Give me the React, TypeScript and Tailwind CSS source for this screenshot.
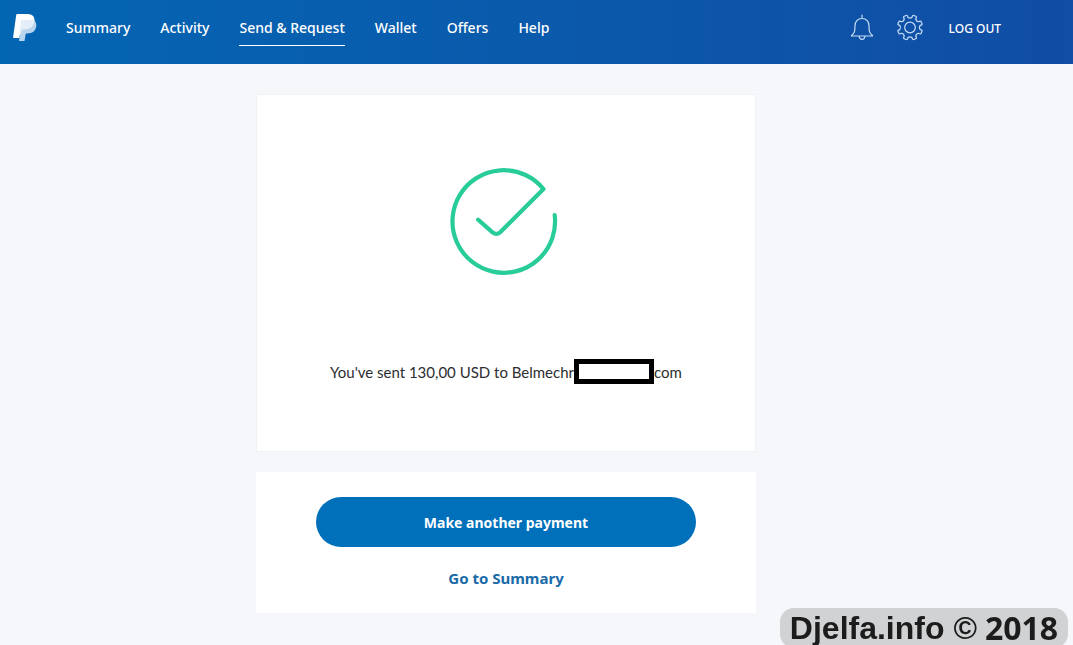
import { clsx } from 'clsx'

const NAV_ITEMS = [
  { label: 'Summary', active: false },
  { label: 'Activity', active: false },
  { label: 'Send & Request', active: true },
  { label: 'Wallet', active: false },
  { label: 'Offers', active: false },
  { label: 'Help', active: false },
]

// Outline of an eight-toothed gear centred on 0,0
function gearPath() {
  const point = (radius: number, degrees: number) => {
    const rad = (degrees * Math.PI) / 180
    return `${(radius * Math.cos(rad)).toFixed(2)} ${(radius * Math.sin(rad)).toFixed(2)}`
  }
  let d = ''
  for (let i = 0; i < 8; i++) {
    const a = 22.5 + i * 45
    d += `${i === 0 ? 'M' : 'L'}${point(10.4, a - 11)}`
    d += `Q${point(12.8, a - 11)} ${point(12.6, a - 5)}L${point(12.6, a + 5)}`
    d += `Q${point(12.8, a + 11)} ${point(10.4, a + 11)}`
    d += `Q${point(8.6, a + 22.5)} ${point(10.4, a + 34)}`
  }
  return d + 'Z'
}

function Logo() {
  return (
    <svg width="24" height="28" viewBox="0 0 24 28" aria-hidden="true">
      <path d="M4.2 0H15.5Q21.8 .8 21.5 6.5Q20.5 15.3 12 15.5H8L6.3 24H.6Q0 24 .1 23.3L3.2 1Q3.4 0 4.2 0Z" fill="#fff" />
      <path d="M9.8 6H20.5Q23.9 8 23.3 12.5Q21.8 19.5 14.5 19.5H12.8L11.5 27H6L8.3 8Q8.6 6 9.8 6Z" fill="#b9d5ee" />
      <path d="M9.8 6H21.5Q20.8 15.3 12 15.5H9.3L8 19.5H7L8.3 8Q8.6 6 9.8 6Z" fill="#e3eef8" />
    </svg>
  )
}

function BellIcon() {
  return (
    <svg width="24" height="28" viewBox="0 0 24 28" fill="none" stroke="#c5dcf5" strokeWidth="1.2" strokeLinecap="round" strokeLinejoin="round" aria-hidden="true">
      <path d="M12 1V4.500M12 4.500C7.5 4.500 5 7.800 5 12C5 17.500 4.5 19 1.5 21.500V22H22.5V21.500C19.5 19 19 17.500 19 12C19 7.800 16.5 4.500 12 4.500Z" />
      <path d="M9.2 22.500C9.5 26.300 14.5 26.300 14.8 22.500" />
    </svg>
  )
}

function GearIcon() {
  return (
    <svg width="28" height="28" viewBox="-14 -13.500 28 28" fill="none" stroke="#c5dcf5" strokeWidth="1.2" strokeLinejoin="round" aria-hidden="true">
      <path d={gearPath()} />
      <circle r="5.3" />
    </svg>
  )
}

function SuccessIcon() {
  return (
    <svg width="112" height="112" viewBox="10 11 112 112" fill="none" stroke="#27cc99" strokeWidth="4.2" strokeLinecap="round" strokeLinejoin="round" aria-hidden="true">
      <path d="M38.2 64.7L52.5 77.4Q56.5 80.5 60.2 77.2L103.5 34A51.3 51.3 0 1 0 114.7 60.2" />
    </svg>
  )
}

function Header() {
  return (
    <header className="h-16 bg-linear-to-r from-[#0366b3] to-[#104da4] text-white">
      <div className="flex h-14 items-center pr-[72px] pl-[13px]">
        <a href="#" aria-label="PayPal">
          <Logo />
        </a>
        <nav className="ml-[29px] flex gap-[30px] text-sm font-medium">
          {NAV_ITEMS.map((item) => (
            <a
              key={item.label}
              href="#"
              className={clsx('border-b pt-2 pb-[7px]', item.active ? 'border-white' : 'border-transparent')}
            >
              {item.label}
            </a>
          ))}
        </nav>
        <div className="ml-auto flex items-center">
          <button type="button" aria-label="Notifications">
            <BellIcon />
          </button>
          <button type="button" aria-label="Settings" className="ml-[22px]">
            <GearIcon />
          </button>
          <a href="#" className="ml-[25px] pt-0.5 text-xs font-medium">
            LOG OUT
          </a>
        </div>
      </div>
    </header>
  )
}

export default function App() {
  return (
    <div className="min-h-screen bg-[#f5f7fa] font-['Noto_Sans',sans-serif]">
      <Header />

      <main className="pt-[30px] pr-[61px] pb-8">
        <div className="mx-auto max-w-[500px] space-y-5">
          <section className="flex flex-col items-center border border-[#eff1f4] bg-white pt-[71px] pb-[67px]">
            <SuccessIcon />
            <p className="mt-[81px] flex items-center font-['Lato',sans-serif] text-[15px] leading-6 text-[#2c2e2f]">
              You've sent 130,00 USD to Belmechr
              <span className="h-[25px] w-20 border-5 border-black bg-white" />
              com
            </p>
          </section>

          <section className="flex flex-col items-center bg-white px-[60px] pt-[25px] pb-[23px] font-bold">
            <button type="button" className="h-[50px] w-full rounded-full bg-[#0070ba] pt-0.5 text-sm text-white">
              Make another payment
            </button>
            <a href="#" className="mt-[19px] text-[15px] leading-6 text-[#1a6ba8]">
              Go to Summary
            </a>
          </section>
        </div>
      </main>

      <div className="fixed right-[5px] -bottom-[3px] flex h-10 w-[288px] items-center justify-center gap-2 rounded-[14px] bg-[#d0d2d4] font-['Liberation_Sans',sans-serif] text-[32px] leading-8 font-bold text-[#1c1c1c]">
        <span>Djelfa.info ©</span>
        <span className="font-['Open_Sans',sans-serif]">2018</span>
      </div>
    </div>
  )
}
